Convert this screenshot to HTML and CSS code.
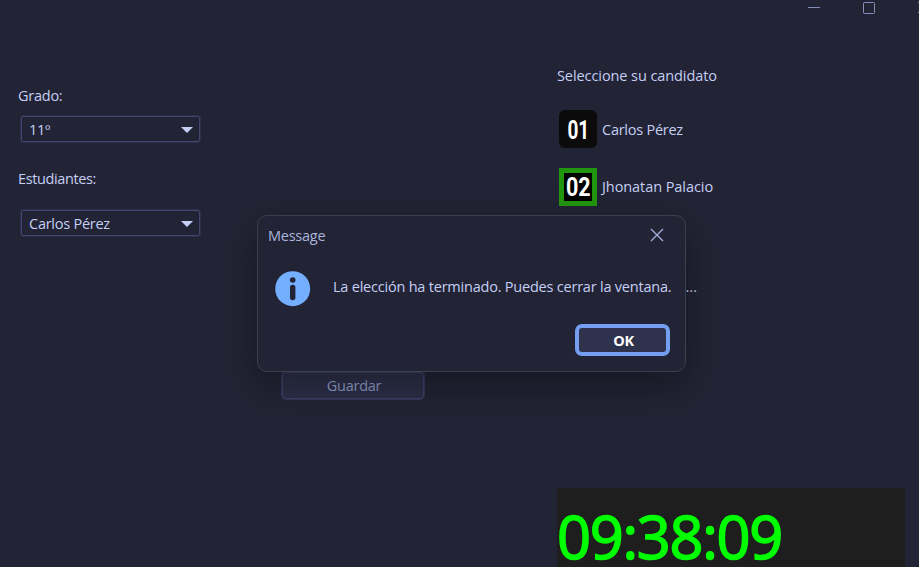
FILE: index.html
```html
<!DOCTYPE html>
<html lang="es">
<head>
<meta charset="utf-8">
<title>Elección</title>
<link rel="stylesheet" href="styles.css">
</head>
<body>
<div class="window">
  <header class="titlebar">
    <svg class="controls" width="119" height="16" viewBox="0 0 119 16">
      <path d="M8 7.5h12"/>
      <rect x="63.5" y="2.500" width="11" height="11" rx="1"/>
      <path d="M118 2l11 11M118 13l11 -11"/>
    </svg>
  </header>
  <main class="content">
    <section class="filters">
      <label class="label">Grado:</label>
      <div class="select grade"><span>11º</span><i class="arrow"></i></div>
      <label class="label students">Estudiantes:</label>
      <div class="select student"><span>Carlos Pérez</span><i class="arrow"></i></div>
    </section>
    <section class="actions">
      <button class="save">Guardar</button>
    </section>
    <section class="ballot">
      <h1 class="heading">Seleccione su candidato</h1>
      <div class="candidate">
        <span class="number"><b>01</b></span><span>Carlos Pérez</span>
      </div>
      <div class="candidate wide">
        <span class="number selected"><b>02</b></span><span>Jhonatan Palacio</span>
      </div>
      <p class="status">n...</p>
      <div class="clock">09:38:09</div>
    </section>
  </main>
  <div class="dialog">
    <div class="dialog-head">
      <span>Message</span>
      <svg width="14" height="14" viewBox="0 0 14 14"><path d="M1 1l12 12M13 1l-12 12"/></svg>
    </div>
    <div class="dialog-body">
      <svg width="36" height="36" viewBox="0 0 36 36">
        <circle cx="17.700" cy="17.700" r="17.500" fill="#73aeff"/>
        <circle cx="17.700" cy="9" r="2.800" fill="#222334"/>
        <rect x="15" y="13.700" width="5.400" height="15.500" rx="2.700" fill="#222334"/>
      </svg>
      <p>La elección ha terminado. Puedes cerrar la ventana.</p>
    </div>
    <div class="dialog-foot"><button class="ok">OK</button></div>
  </div>
</div>
</body>
</html>
```
FILE: styles.css
```css
* { box-sizing: border-box; margin: 0; }
body {
  background: #222334;
  color: #c5cff5;
  font: 14.5px/20px "Open Sans", "Noto Sans", sans-serif;
  letter-spacing: -0.25px;
  overflow: hidden;
}
button { font: inherit; letter-spacing: inherit; padding: 0; }
.window { position: relative; width: 919px; height: 567px; overflow: hidden; }
.titlebar { height: 16px; display: flex; justify-content: flex-end; }
.controls { fill: none; stroke: #868db8; stroke-width: 1; display: block; }
.content { height: 551px; display: grid; grid-template-columns: 263px 276px 348px; padding-left: 18px; }

.filters { padding-top: 70px; }
.label { display: block; }
.label.students { letter-spacing: -0.38px; }
.select {
  width: 181px; height: 28px; margin-left: 2px; padding: 2px 7px 0 8px;
  border: 1px solid #2e3049; box-shadow: inset 0 0 0 1px #41466f; border-radius: 3px;
  display: flex; align-items: center; justify-content: space-between;
}
.select.grade { margin-top: 9px; margin-bottom: 26px; }
.select.student { margin-top: 20px; }
.arrow { border: 6px solid transparent; border-top: 6px solid #c5cff5; border-bottom: 0; }

.actions { padding-top: 355px; }
.save {
  width: 144px; height: 29px; display: block; text-align: center; padding: 1px 0 0 2px;
  background: #2c2e47; border: 1px solid #333658; box-shadow: inset 0 0 0 1px #3b4069;
  border-radius: 5px; color: #8f9cc8;
}

.ballot { padding-top: 50px; display: flex; flex-direction: column; }
.heading { font-size: inherit; font-weight: 400; letter-spacing: -0.08px; margin-bottom: 24px; }
.candidate { display: flex; align-items: center; gap: 5px; padding-left: 2px; height: 38px; margin-bottom: 20px; }
.candidate > span:last-child { padding-top: 1px; }
.candidate.wide { margin-bottom: 0; letter-spacing: -0.07px; }
.candidate.wide > span:last-child { padding-top: 0; }
.number {
  width: 38px; height: 38px; border-radius: 6px; background: #0b0b0b; color: #fff;
  display: flex; align-items: center; justify-content: center;
}
.number.selected { border: 5px solid #22950e; border-radius: 0; background: #000; }
.number b { font: 700 25px/28px Roboto, sans-serif; letter-spacing: 0; padding-top: 3px; transform: scaleX(.76); }
.number.selected b { padding-top: 2px; transform: scaleX(.86); }
.status { width: 140px; margin-top: 71px; text-align: right; letter-spacing: 0; }
.clock {
  height: 79px; margin-top: auto; padding-top: 12px;
  background: #1e1e1e; color: #0f0;
  font: 500 59.5px/72px "Open Sans", sans-serif; letter-spacing: -1.3px;
  -webkit-text-stroke: 1.600px #0f0;
}

.dialog {
  position: absolute; left: 257px; top: 215px; width: 429px; height: 157px;
  background: #222334; border: 1px solid #3e3f4b; border-radius: 10px;
  box-shadow: 0 14px 38px rgba(0, 0, 0, .32);
}
.dialog-head { height: 40px; padding: 0 21px 0 10px; display: flex; align-items: center; justify-content: space-between; color: #a9b4dc; }
.dialog-head svg { stroke: #a5b0e0; stroke-width: 1.300; fill: none; margin-bottom: 2px; }
.dialog-body { height: 66px; padding: 0 0 0 17px; display: flex; align-items: center; gap: 22px; }
.dialog-body p { padding-bottom: 4px; white-space: nowrap; letter-spacing: -0.215px; }
.dialog-foot { display: flex; justify-content: flex-end; padding-right: 15px; padding-top: 2px; }
.ok {
  width: 95px; height: 32px; background: #2f324c; color: #fff; font-weight: 700; padding: 1px 0 0 2px;
  border: 4px solid #749ff0; border-radius: 7px;
}
```
